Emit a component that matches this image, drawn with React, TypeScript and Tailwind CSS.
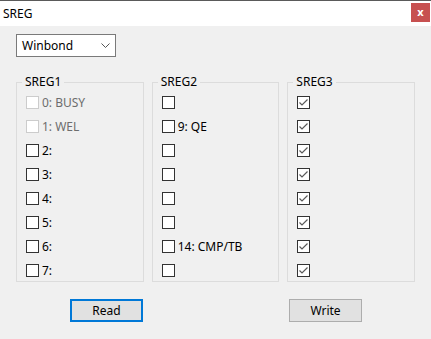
import React from 'react'

type Bit = { label: string; checked?: boolean; disabled?: boolean }

const groups: { title: string; bits: Bit[] }[] = [
  {
    title: 'SREG1',
    bits: [
      { label: '0: BUSY', disabled: true },
      { label: '1: WEL', disabled: true },
      { label: '2:' },
      { label: '3:' },
      { label: '4:' },
      { label: '5:' },
      { label: '6:' },
      { label: '7:' },
    ],
  },
  {
    title: 'SREG2',
    bits: [
      { label: '' },
      { label: '9: QE' },
      { label: '' },
      { label: '' },
      { label: '' },
      { label: '' },
      { label: '14: CMP/TB' },
      { label: '' },
    ],
  },
  {
    title: 'SREG3',
    bits: Array.from({ length: 8 }, () => ({ label: '', checked: true })),
  },
]

function CheckBox({ bit }: { bit: Bit }) {
  return (
    <div className="flex items-center h-[13px]">
      <div
        className={`w-[13px] h-[13px] border bg-white flex items-center justify-center ${
          bit.disabled ? 'border-[#cccccc]' : 'border-[#333333]'
        }`}
      >
        {bit.checked && (
          <svg width="11" height="11" viewBox="0 0 11 11">
            <polyline points="1.5,5.5 4,8 9.5,2.5" fill="none" stroke="#5a5a5a" strokeWidth="1.2" />
          </svg>
        )}
      </div>
      {bit.label && (
        <span className={`ml-[3px] leading-[16px] ${bit.disabled ? 'text-[#6d6d6d]' : 'text-black'}`}>{bit.label}</span>
      )}
    </div>
  )
}

export default function App() {
  return (
    <div className="w-[431px] h-[339px] bg-[#f0f0f0] flex flex-col text-[12px] font-['Noto_Sans',sans-serif] text-black overflow-hidden">
      {/* title bar */}
      <div className="h-[26px] border-t border-[#5a5a5a] bg-white flex items-start justify-between pl-[3px] pr-[1px]">
        <span className="mt-[5px] leading-[16px]">SREG</span>
        <div className="mt-[2px] w-[19px] h-[19px] bg-[#c75050] flex items-center justify-center">
          <span className="text-white font-bold text-[11px] leading-none -mt-[2px]">x</span>
        </div>
      </div>

      <div className="flex flex-col px-[16px] pt-[8px]">
        {/* combo */}
        <div className="w-[100px] h-[23px] border border-[#7a7a7a] bg-white flex items-center justify-between pl-[5px] pr-[5px]">
          <span className="leading-[16px]">Winbond</span>
          <svg width="9" height="6" viewBox="0 0 9 6">
            <polyline points="0.5,0.5 4.5,4.5 8.5,0.5" fill="none" stroke="#555" strokeWidth="1" />
          </svg>
        </div>

        {/* group boxes */}
        <div className="flex gap-[8px] mt-[17px]">
          {groups.map(g => (
            <fieldset key={g.title} className="w-[128px] border border-[#dcdcdc] pl-[9px] pt-[6px] pb-[4px]">
              <legend className="-ml-[4px] px-[3px] leading-[16px]">{g.title}</legend>
              <div className="flex flex-col gap-[11px]">
                {g.bits.map((b, i) => (
                  <CheckBox key={i} bit={b} />
                ))}
              </div>
            </fieldset>
          ))}
        </div>

        {/* buttons */}
        <div className="flex mt-[17px]">
          <button className="ml-[54px] w-[73px] h-[23px] border-2 border-[#0078d7] bg-[#e1e1e1] leading-[16px]">Read</button>
          <button className="ml-[146px] w-[73px] h-[23px] border border-[#adadad] bg-[#e1e1e1] leading-[16px]">Write</button>
        </div>
      </div>
    </div>
  )
}
